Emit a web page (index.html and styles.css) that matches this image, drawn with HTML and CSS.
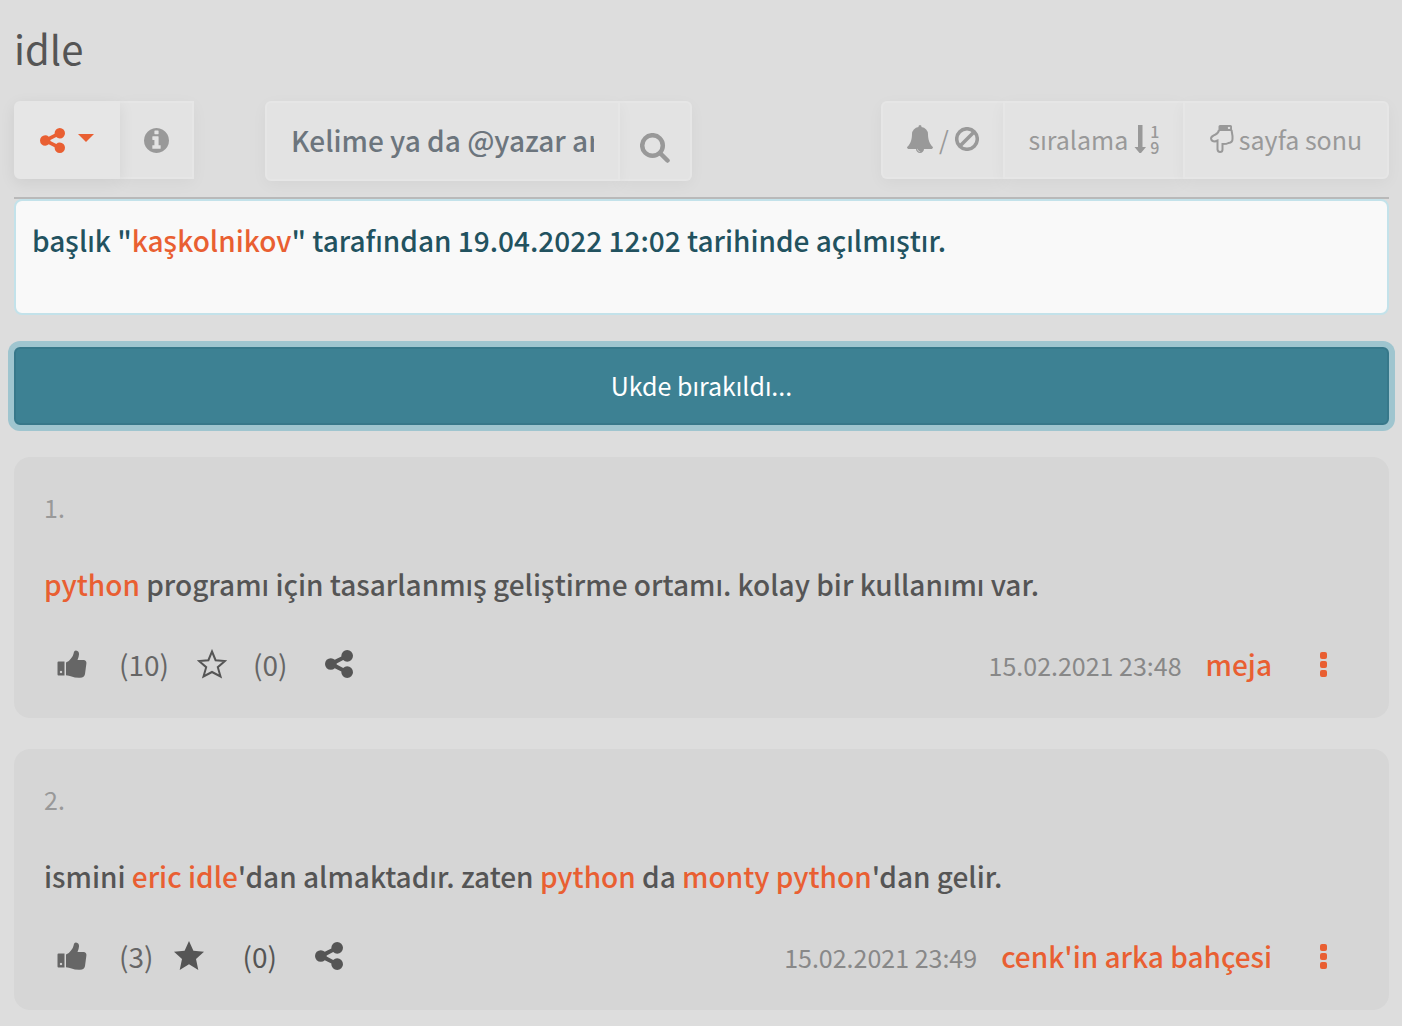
FILE: index.html
```html
<!DOCTYPE html>
<html lang="tr">
<head>
<meta charset="utf-8">
<meta name="viewport" content="width=device-width, initial-scale=1">
<title>idle</title>
<link rel="stylesheet" href="styles.css">
</head>
<body>
<svg class="sprite" aria-hidden="true">
  <symbol id="share" viewBox="128 128 1536 1536"><path d="M1344 1024q133 0 226.500 93.500t93.500 226.500-93.500 226.500-226.500 93.500-226.500-93.500-93.500-226.500q0-12 2-34l-360-180q-92 86-218 86-133 0-226.500-93.500t-93.500-226.500 93.500-226.500 226.500-93.500q126 0 218 86l360-180q-2-22-2-34 0-133 93.500-226.500t226.500-93.500 226.500 93.500 93.500 226.500-93.500 226.500-226.500 93.500q-126 0-218-86l-360 180q2 22 2 34t-2 34l360 180q92-86 218-86z"/></symbol>
  <symbol id="thumb" viewBox="0 0 30 28"><path fill-rule="evenodd" d="M1.500 11.500H7.500V25.500H1.500Q.5 25.500.5 24.500V12.500Q.5 11.500 1.500 11.500zM4 20.800a1.200 1.200 0 1 0 .01 0z"/><path d="M9 12.500Q12.500 11 14 8.500 16.200 6 16.600 3.500 17 .3 19 .4 22.300.8 22 4.500 21.800 7 20.500 10H27Q29.700 10.500 29.400 13.500L28 24Q27.500 27.500 23 27.800 18 28 14.500 26.500 12 25.500 9 25.300z"/></symbol>
  <symbol id="dots" viewBox="0 0 7 25"><rect width="7" height="7" rx="2"/><rect y="9" width="7" height="7" rx="2"/><rect y="18" width="7" height="7" rx="2"/></symbol>
</svg>
<main class="page">
  <h1 class="title">idle</h1>
  <div class="toolbar">
    <div class="group">
      <button class="btn btn-share" type="button" aria-label="Paylaş"><svg class="ic-share-sm"><use href="#share"/></svg><span class="caret"></span></button>
      <button class="btn btn-info" type="button" aria-label="Bilgi"><svg class="ic-info" viewBox="128 128 1536 1536"><path d="M1152 1376v-160q0-14-9-23t-23-9h-96v-512q0-14-9-23t-23-9h-320q-14 0-23 9t-9 23v160q0 14 9 23t23 9h96v320h-96q-14 0-23 9t-9 23v160q0 14 9 23t23 9h448q14 0 23-9t9-23zm-128-896v-160q0-14-9-23t-23-9h-192q-14 0-23 9t-9 23v160q0 14 9 23t23 9h192q14 0 23-9t9-23zm640 416q0 209-103 385.500t-279.500 279.500-385.500 103-385.500-103-279.500-279.500-103-385.500 103-385.500 279.500-279.500 385.500-103 385.500 103 279.500 279.500 103 385.500z"/></svg></button>
    </div>
    <form class="group search">
      <input class="search-input" type="text" aria-label="Başlıkta ara" placeholder="Kelime ya da @yazar ara">
      <button class="btn btn-search" type="button" aria-label="Ara"><svg class="ic-search" viewBox="0 0 30 30"><circle cx="12.500" cy="12.500" r="10.300"/><path d="M20 20L27.500 27.500"/></svg></button>
    </form>
    <div class="group group-end">
      <button class="btn btn-notify" type="button" aria-label="Bildirim"><svg class="ic-bell" viewBox="64 0 1664 1792"><path d="M912 1696q0-16-16-16-59 0-101.500-42.500t-42.500-101.500q0-16-16-16t-16 16q0 73 51.500 124.500t124.500 51.500q16 0 16-16zm816-288q0 52-38 90t-90 38h-448q0 106-75 181t-181 75-181-75-75-181h-448q-52 0-90-38t-38-90q50-42 91-88t85-119.500 74.500-158.500 50-206 19.500-260q0-152 117-282.500t307-158.500q-8-19-8-39 0-40 28-68t68-28 68 28 28 68q0 20-8 39 190 28 307 158.500t117 282.500q0 139 19.500 260t50 206 74.500 158.500 85 119.500 91 88z"/></svg><span>/</span><svg class="ic-ban" viewBox="0 0 24 24"><circle cx="12" cy="12" r="10.300"/><path d="M19 5L5 19"/></svg></button>
      <button class="btn btn-sort" type="button"><span>sıralama</span><svg class="ic-sort" viewBox="0 0 12 28"><path d="M4 0H8.500V22H12L7 28H5.500L.5 22H4z"/></svg><span class="digits"><span>1</span><span>9</span></span></button>
      <button class="btn btn-end" type="button"><svg class="ic-hand" viewBox="0 0 24 28"><path class="cuff" d="M10 0H20.500Q22 0 22 1.500V6H8.500V1.500Q8.500 0 10 0zM19 1.700a1.200 1.200 0 1 0 .01 0z"/><path class="hand" d="M9 5Q8.500 8 5.500 9.500 1 11.500 1 13.500 1.300 16.500 5 16.500L7.500 15.500V24.500Q8 27 10 27 12.500 27 12.500 24.500V19Q17 19 18.500 18 22.500 17.500 22.500 14V11L21.500 5"/></svg><span>sayfa sonu</span></button>
    </div>
  </div>
  <div class="notice">başlık "<a href="#">kaşkolnikov</a>" tarafından 19.04.2022 12:02 tarihinde açılmıştır.</div>
  <button class="ukde" type="button">Ukde bırakıldı...</button>

  <article class="entry">
    <div class="num">1.</div>
    <p class="text"><a href="#">python</a> programı için tasarlanmış geliştirme ortamı. kolay bir kullanımı var.</p>
    <div class="foot">
      <button class="act act-like" type="button"><svg class="ic-thumb"><use href="#thumb"/></svg><span>(10)</span></button>
      <button class="act act-fav" type="button"><svg class="ic-star" viewBox="0 0 30 30"><path class="line" d="M15 2.500L18.600 11.200 28 12 20.800 18.200 23.500 27.500 15 23 6.500 27.500 9.200 18.200 2 12 11.400 11.200z"/></svg><span>(0)</span></button>
      <button class="act dark" type="button" aria-label="Paylaş"><svg class="ic-share"><use href="#share"/></svg></button>
      <time class="date">15.02.2021 23:48</time>
      <a class="author" href="#">meja</a>
      <button class="act more" type="button" aria-label="Menü"><svg class="ic-dots"><use href="#dots"/></svg></button>
    </div>
  </article>

  <article class="entry">
    <div class="num">2.</div>
    <p class="text">ismini <a href="#">eric idle</a>'dan almaktadır. zaten <a href="#">python</a> da <a href="#">monty python</a>'dan gelir.</p>
    <div class="foot">
      <button class="act act-like" type="button"><svg class="ic-thumb"><use href="#thumb"/></svg><span>(3)</span></button>
      <button class="act act-fav faved dark" type="button"><svg class="ic-star" viewBox="0 0 30 30"><path d="M15 0L19.400 9.800 30 10.800 22 18 24.300 29 15 23.300 5.700 29 8 18 0 10.800 10.600 9.800z"/></svg><span>(0)</span></button>
      <button class="act dark" type="button" aria-label="Paylaş"><svg class="ic-share"><use href="#share"/></svg></button>
      <time class="date">15.02.2021 23:49</time>
      <a class="author" href="#">cenk'in arka bahçesi</a>
      <button class="act more" type="button" aria-label="Menü"><svg class="ic-dots"><use href="#dots"/></svg></button>
    </div>
  </article>
</main>
</body>
</html>
```
FILE: styles.css
```css
* { box-sizing: border-box; }
body {
  margin: 0;
  background: #ddd;
  color: #555;
  font-family: "Noto Sans CJK SC", "Noto Sans", sans-serif;
  font-size: 28px;
  font-weight: 500;
  line-height: 48px;
}
a { color: #e95f32; text-decoration: none; }
button, input { font: inherit; margin: 0; }
svg { display: block; flex: none; fill: currentColor; }
.sprite { position: absolute; width: 0; height: 0; }
.page { padding: 18px 13px 16px 14px; }
.title { margin: 0 0 23px; font-size: 40px; line-height: 60px; font-weight: 400; }

.toolbar {
  display: flex;
  align-items: flex-start;
  gap: 71px;
  height: 98px;
  border-bottom: 2px solid #b9b9b9;
}
.group { display: flex; }
.group-end { margin-left: auto; }
.btn {
  display: flex;
  align-items: center;
  justify-content: center;
  height: 78px;
  padding: 0 20px;
  border: 2px solid #e6e6e6;
  background: #e3e3e3;
  color: #999;
  font-size: 25px;
  font-weight: 400;
  white-space: nowrap;
  box-shadow: 0 4px 16px rgba(0, 0, 0, .04);
}
.btn:first-child { border-radius: 6px 0 0 6px; }
.group-end .btn { padding-bottom: 2px; border-right-width: 0; }
.group-end .btn:last-child { border-right-width: 2px; border-radius: 0 6px 6px 0; }
.btn-share {
  position: relative;
  gap: 13px;
  width: 106px;
  background: #e6e6e6;
  color: #e95f32;
  box-shadow: 0 4px 16px rgba(0, 0, 0, .07);
}
.btn-info { width: 74px; border-left: 0; }
.caret { border: 8px solid transparent; border-top-color: currentColor; border-bottom: 0; margin-bottom: 4px; }
.ic-share-sm, .ic-info { width: 25px; height: 25px; }
.search { width: 427px; margin: 0; }
.search-input {
  flex: 1;
  min-width: 0;
  height: 80px;
  padding: 0 24px 2px;
  border: 2px solid #e6e6e6;
  border-radius: 6px 0 0 6px;
  background: #e3e3e3;
  color: #6c757d;
  font-weight: 500;
  position: relative;
  box-shadow: 0 4px 16px rgba(0, 0, 0, .04);
}
.search-input::placeholder { color: #6c757d; opacity: 1; }
.btn.btn-search { width: 72px; height: 80px; padding: 13px 0 0; border-left: 0; border-radius: 0 6px 6px 0; }
.ic-search { width: 30px; height: 30px; fill: none; stroke: currentColor; stroke-width: 4.500; stroke-linecap: round; }
.btn-notify { gap: 6px; width: 122px; }
.ic-bell { width: 26px; height: 28px; }
.ic-ban { width: 24px; height: 24px; fill: none; stroke: currentColor; stroke-width: 3.500; }
.btn-sort { gap: 6px; width: 180px; }
.ic-sort { width: 12px; height: 28px; }
.digits { display: flex; flex-direction: column; margin-left: -2px; font-size: 16px; font-weight: 500; line-height: 16px; }
.btn-end { gap: 5px; width: 206px; }
.ic-hand { width: 24px; height: 28px; }
.cuff { fill-rule: evenodd; }
.hand { fill: none; stroke: currentColor; stroke-width: 2; }

.notice {
  min-height: 116px;
  margin: 0 0 32px;
  padding: 15px 16px;
  border: 2px solid #c3e2ea;
  border-radius: 8px;
  background: #f9f9f9;
  color: #22525f;
}
.ukde {
  display: block;
  width: 100%;
  height: 78px;
  margin-bottom: 32px;
  padding: 0 0 2px;
  border: 2px solid #37788a;
  border-radius: 6px;
  background: #3d8193;
  color: #fff;
  font-size: 25px;
  font-weight: 400;
  box-shadow: 0 0 0 6px #9fc5cf;
}

.entry {
  margin-bottom: 31px;
  padding: 26px 30px 30px;
  border-radius: 16px;
  background: #d6d6d6;
}
.entry:last-child { margin-bottom: 0; }
.num { color: #999; font-size: 25px; font-weight: 400; }
.text { margin: 29px 0 32px; }
.foot { display: flex; align-items: center; }
.act {
  display: flex;
  align-items: center;
  height: 48px;
  padding: 0;
  border: 0;
  background: none;
  color: #666;
  font-weight: 400;
}
.act.dark { color: #555; }
.act-like { gap: 32px; margin: 0 28px 0 13px; }
.act-fav { gap: 26px; margin-right: 38px; }
.faved { gap: 38px; margin-left: -7px; }
.ic-thumb { width: 30px; height: 28px; }
.ic-star { width: 30px; height: 30px; color: #555; }
.line { fill: none; stroke: currentColor; stroke-width: 2; }
.ic-share { width: 28px; height: 28px; }
.date { margin-left: auto; padding-top: 2px; color: #888; font-size: 25px; font-weight: 400; line-height: 46px; }
.author { margin: 0 48px 0 24px; }
.act.more { margin-right: 32px; color: #e95f32; }
.ic-dots { width: 7px; height: 25px; }
```
